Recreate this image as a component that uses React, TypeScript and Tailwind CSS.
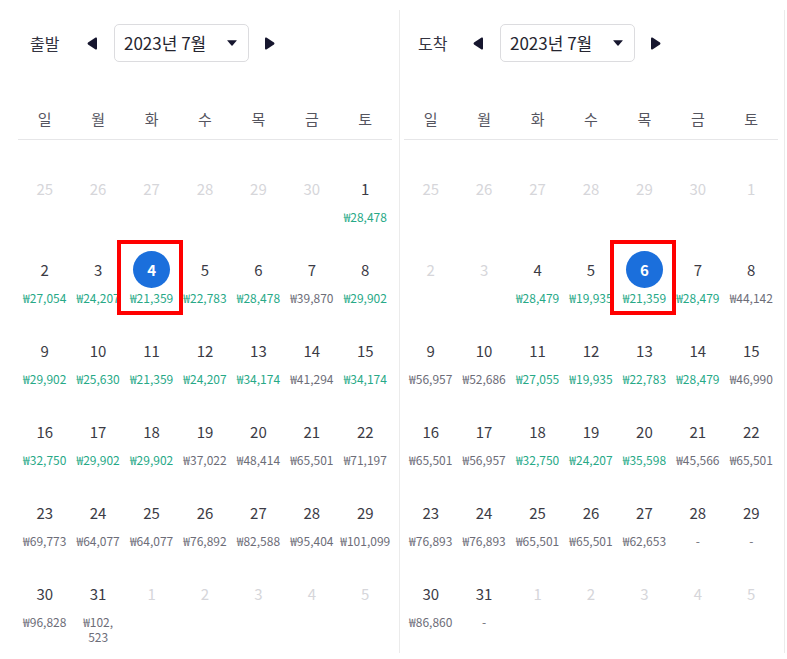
import React from "react";

type Day = { d: number; p?: string; g?: boolean; off?: boolean; sel?: boolean };

const G = (d: number, p: string): Day => ({ d, p, g: true });
const N = (d: number, p: string): Day => ({ d, p });
const X = (d: number): Day => ({ d, off: true });

const left: Day[] = [
  X(25), X(26), X(27), X(28), X(29), X(30), G(1, "₩28,478"),
  G(2, "₩27,054"), G(3, "₩24,207"), { d: 4, p: "₩21,359", g: true, sel: true }, G(5, "₩22,783"), G(6, "₩28,478"), N(7, "₩39,870"), G(8, "₩29,902"),
  G(9, "₩29,902"), G(10, "₩25,630"), G(11, "₩21,359"), G(12, "₩24,207"), G(13, "₩34,174"), N(14, "₩41,294"), G(15, "₩34,174"),
  G(16, "₩32,750"), G(17, "₩29,902"), G(18, "₩29,902"), N(19, "₩37,022"), N(20, "₩48,414"), N(21, "₩65,501"), N(22, "₩71,197"),
  N(23, "₩69,773"), N(24, "₩64,077"), N(25, "₩64,077"), N(26, "₩76,892"), N(27, "₩82,588"), N(28, "₩95,404"), N(29, "₩101,099"),
  N(30, "₩96,828"), N(31, "₩102,\n523"), X(1), X(2), X(3), X(4), X(5),
];

const right: Day[] = [
  X(25), X(26), X(27), X(28), X(29), X(30), X(1),
  X(2), X(3), G(4, "₩28,479"), G(5, "₩19,935"), { d: 6, p: "₩21,359", g: true, sel: true }, G(7, "₩28,479"), N(8, "₩44,142"),
  N(9, "₩56,957"), N(10, "₩52,686"), G(11, "₩27,055"), G(12, "₩19,935"), G(13, "₩22,783"), G(14, "₩28,479"), N(15, "₩46,990"),
  N(16, "₩65,501"), N(17, "₩56,957"), G(18, "₩32,750"), G(19, "₩24,207"), G(20, "₩35,598"), N(21, "₩45,566"), N(22, "₩65,501"),
  N(23, "₩76,893"), N(24, "₩76,893"), N(25, "₩65,501"), N(26, "₩65,501"), N(27, "₩62,653"), N(28, "-"), N(29, "-"),
  N(30, "₩86,860"), N(31, "-"), X(1), X(2), X(3), X(4), X(5),
];

const weekdays = ["일", "월", "화", "수", "목", "금", "토"];

function ArrowLeft() {
  return (
    <svg width="10" height="13" viewBox="0 0 10 13" className="shrink-0">
      <path d="M8.6 0.6 Q10 0 10 1.6 L10 11.4 Q10 13 8.6 12.4 L1 7.4 Q0 6.5 1 5.6 Z" fill="#16162e" />
    </svg>
  );
}

function ArrowRight() {
  return (
    <svg width="10" height="13" viewBox="0 0 10 13" className="shrink-0">
      <path d="M1.4 0.6 Q0 0 0 1.6 L0 11.4 Q0 13 1.4 12.4 L9 7.4 Q10 6.5 9 5.6 Z" fill="#16162e" />
    </svg>
  );
}

function Caret() {
  return (
    <svg width="10" height="6" viewBox="0 0 10 6" className="shrink-0">
      <path d="M0.5 0.3 L9.5 0.3 Q10 0.3 9.6 0.8 L5.5 5.5 Q5 6 4.5 5.5 L0.4 0.8 Q0 0.3 0.5 0.3 Z" fill="#16162e" />
    </svg>
  );
}

function Cell({ day }: { day: Day }) {
  const numCls = day.sel
    ? "bg-[#1b6fdc] text-white font-bold rounded-full"
    : day.off
    ? "text-[#d6d6da]"
    : "text-[#3b3b45]";
  return (
    <div className="relative h-[81px] flex flex-col items-center">
      <div className={`shrink-0 mt-[30px] w-[37px] h-[37px] flex items-center justify-center text-[15px] leading-none ${numCls}`}>
        {day.d}
      </div>
      {day.p && (
        <div
          className={`shrink-0 mt-[2px] text-[12px] leading-[15px] text-center whitespace-pre ${
            day.g ? "text-[#27a987]" : "text-[#6d6d78]"
          }`}
        >
          {day.p}
        </div>
      )}
      {day.sel && (
        <div className="absolute left-[-8px] top-[19px] w-[66px] h-[75px] border-4 border-[#ff0000] z-10" />
      )}
    </div>
  );
}

function Panel({
  label,
  days,
  outer,
  labelW,
  headPad,
}: {
  label: string;
  days: Day[];
  outer: string;
  labelW: string;
  headPad: string;
}) {
  return (
    <div className={`h-[643px] border-r border-[#ebebeb] ${outer}`}>
      <div className={`mt-[14px] h-[38px] flex items-center ${headPad}`}>
        <span className={`text-[16px] text-[#333340] ${labelW}`}>{label}</span>
        <ArrowLeft />
        <div className="ml-[17px] w-[135px] h-[38px] border border-[#dcdcdf] rounded-[5px] flex items-center justify-between pl-[9px] pr-[11px]">
          <span className="text-[17px] text-[#25252f]">2023년 7월</span>
          <Caret />
        </div>
        <div className="ml-[16px] flex">
          <ArrowRight />
        </div>
      </div>
      <div className="w-[374px]">
        <div className="mt-[38px] grid grid-cols-7 border-b border-[#e6e6e8]">
          {weekdays.map((w) => (
            <div key={w} className="h-[39px] flex items-center justify-center text-[15px] text-[#55555f]">
              {w}
            </div>
          ))}
        </div>
        <div className="grid grid-cols-7">
          {days.map((d, i) => (
            <Cell key={i} day={d} />
          ))}
        </div>
      </div>
    </div>
  );
}

export default function App() {
  return (
    <div
      className="w-[787px] h-[659px] bg-white flex pt-[10px] overflow-hidden"
      style={{ fontFamily: '"Noto Sans CJK KR", "Noto Sans", sans-serif' }}
    >
      <Panel label="출발" days={left} outer="w-[400px] pl-[18px]" labelW="w-[57px]" headPad="pl-[12px]" />
      <Panel label="도착" days={right} outer="w-[385px] pl-[4px]" labelW="w-[55px]" headPad="pl-[14px]" />
    </div>
  );
}
